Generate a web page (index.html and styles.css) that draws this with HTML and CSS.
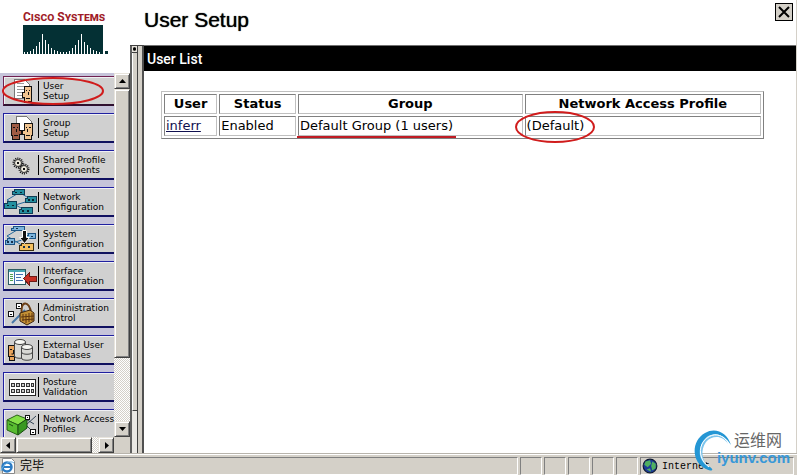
FILE: index.html
```
<!DOCTYPE html>
<html lang="en">
<head>
  <meta charset="UTF-8">
  <title>User Setup</title>
  <link rel="stylesheet" href="styles.css">
</head>
<body>

<div class="workspace">

  <!-- Left frame: logo and menu -->
  <aside class="sidebar">
    <div class="logo">
      <div class="logo-name">Cisco Systems</div>
      <svg class="logo-bridge" viewBox="0 0 85 29" shape-rendering="crispEdges">
        <path fill="#043034" d="M0 0h80v29H0zM82 26h3v3h-3z"/>
        <path stroke="#fff" d="M1.5 27v2M4.5 27v2M7.5 26v3M10.5 24v5M13.5 21v8M16.5 17v12M19.5 9v20M22.5 15v14M25.5 19v10M28.5 23v6M31.5 25v4M34.5 26v3M37.5 27v2M40.5 27v2M43.5 27v2M46.5 26v3M49.5 23v6M52.5 20v9M55.5 15v14M58.5 9v20M61.5 17v12M64.5 20v9M67.5 23v6M70.5 25v4M73.5 26v3M76.5 27v2"/>
      </svg>
    </div>

    <div class="menu-frame">
      <nav class="menu">
        <a href="#" class="item current">
          <svg viewBox="0 0 34 26" shape-rendering="crispEdges">
            <path fill="#fff" stroke="#777" d="M10.5 1.5h10l5 5v14h-15z"/>
            <path stroke="#999" d="M13 5.5h7M13 8.5h9M13 11.5h9M13 14.5h7M13 17.5h6"/>
            <path fill="#f0c490" stroke="#111" d="M20.5 8.5h7v15h-3v1h-4v-5h-2v-5h2z"/>
            <path fill="none" stroke="#111" d="M22 12.5h1M25 12.5h1M24.5 14v3M22 20.5h4"/>
          </svg>
          <span>User<br>Setup</span>
        </a>
        <a href="#" class="item">
          <svg viewBox="0 0 34 26" shape-rendering="crispEdges">
            <path fill="#fff" stroke="#777" d="M12.5 1.5h10l5 5v12h-15z"/>
            <path fill="#a05c44" stroke="#111" d="M7.5 8.5h8v7h2v4h-2v5h-7v-4h-1z"/>
            <path fill="#f0c490" stroke="#111" d="M20.5 8.5h8v12h-1v4h-7v-5h-2v-4h2z"/>
            <path fill="none" stroke="#111" d="M9 12.5h2M13 12.5h1M22 12.5h1M25 12.5h2M12.5 14v3M23.5 14v3M10 20.5h4M22 20.5h4"/>
          </svg>
          <span>Group<br>Setup</span>
        </a>
        <a href="#" class="item">
          <svg viewBox="0 0 34 26">
            <g fill="none" stroke="#111" stroke-dasharray="1 1">
              <circle cx="14" cy="11" r="4.5" stroke-width="2"/>
              <circle cx="20" cy="17" r="4.5" stroke-width="2"/>
            </g>
            <g fill="#eeeadc" stroke="#333">
              <circle cx="14" cy="11" r="3.5"/>
              <circle cx="20" cy="17" r="3.5"/>
            </g>
            <path fill="#111" d="M13 10h2v2h-2zM19 16h2v2h-2z"/>
          </svg>
          <span>Shared Profile<br>Components</span>
        </a>
        <a href="#" class="item">
          <svg viewBox="0 0 34 26">
            <path fill="none" stroke="#266a9c" d="M13 5L3 11L24 23M18 5L28 11L8 17"/>
            <g fill="#2490a0" stroke="#123c54" shape-rendering="crispEdges">
              <path d="M10.5 .5h10v5h-12v-3h2zM23.5 7.5h9v6h-11v-4h2zM3.5 12.5h9v7h-12v-5h3zM17.5 18.5h11v6h-13v-4h2z"/>
            </g>
            <path fill="#0a2430" d="M11 3h2v1h-2zM16 3h2v1h-2zM24 10h2v2h-2zM28 10h2v2h-2zM3 16h2v1H3zM8 16h2v1H8zM18 21h2v2h-2zM23 21h2v2h-2z"/>
          </svg>
          <span>Network<br>Configuration</span>
        </a>
        <a href="#" class="item">
          <svg viewBox="0 0 34 26">
            <path fill="none" stroke="#266a9c" d="M13 4L3 10L24 23M18 4L28 11L8 17"/>
            <g stroke="#1c5484" shape-rendering="crispEdges">
              <path fill="#7cb4dc" d="M9.5 .5h11v4h-13v-2h2zM24.5 7.5h7v5h-10v-3h3zM3.5 12.5h7v6h-9v-4h2z"/>
              <path fill="#f4c060" stroke="#3a2c10" d="M17.5 17.5h12v7h-14v-5h2z"/>
            </g>
            <path fill="#111" stroke="#fff" d="M18.5 4.5h4v7h3l-5 6l-5-6h3z"/>
            <path fill="#17304c" d="M3 15h2v2H3zM7 15h2v2H7zM12 2h2v1h-2zM27 10h2v1h-2zM19 20h2v2h-2zM24 20h2v2h-2z"/>
          </svg>
          <span>System<br>Configuration</span>
        </a>
        <a href="#" class="item">
          <svg viewBox="0 0 34 26" shape-rendering="crispEdges">
            <path fill="#f8fcff" stroke="#2c5c60" d="M4.5 6.5h17v15h-17z"/>
            <path fill="#48a8b4" d="M5 7h16v2H5z"/>
            <path stroke="#50a050" d="M6 11.5h3M6 13.5h3M6 15.5h3M6 17.5h3"/>
            <path stroke="#4070b0" d="M10.5 9v12M12 11.5h7M12 14.5h5M12 17.5h7"/>
            <path fill="#c83024" stroke="#6c1c18" d="M19.5 15.5l6-6v4h7v5h-7v4z"/>
          </svg>
          <span>Interface<br>Configuration</span>
        </a>
        <a href="#" class="item">
          <svg viewBox="0 0 34 26">
            <path fill="none" stroke="#4878a8" stroke-width="2" d="M8 23L21 10"/>
            <g fill="#fff" stroke="#111" shape-rendering="crispEdges">
              <path d="M4.5 11.5h5v5h-5zM12.5 3.5h5v5h-5z"/>
              <path fill="#111" d="M6 14h2M14 6h2"/>
            </g>
            <path fill="none" stroke="#6c4018" stroke-width="2" d="M18 15C15 0 26 0 27 13"/>
            <path fill="#c49034" stroke="#3c2410" d="M16 13l10-3l4 3v8l-7 4l-7-4z"/>
            <path stroke="#5c3410" d="M19 14v7M22 14v9M25 13v9M28 13v8M17 17l13-1M18 20l12-1"/>
          </svg>
          <span>Administration<br>Control</span>
        </a>
        <a href="#" class="item">
          <svg viewBox="0 0 34 26">
            <path fill="#e8a45c" stroke="#111" shape-rendering="crispEdges" d="M4.5 8.5h8v11h-2v4h-5v-4h-1z"/>
            <path fill="none" stroke="#111" d="M6 12.5h2M10 12.5h1M9.5 13v4h-2M6 19.5h4"/>
            <g fill="#d8d8d4" stroke="#444">
              <path d="M10.500 5v14c0 3 11 3 11 0V5"/>
              <ellipse cx="16" cy="5" rx="5.500" ry="2.500" fill="#f8f8f4"/>
              <path d="M17.500 10v11c0 3 11 3 11 0V10"/>
              <ellipse cx="23" cy="10" rx="5.500" ry="2.500" fill="#f8f8f4"/>
              <path fill="none" d="M17.500 15c0 3 11 3 11 0"/>
            </g>
          </svg>
          <span>External User<br>Databases</span>
        </a>
        <a href="#" class="item">
          <svg viewBox="0 0 34 26" shape-rendering="crispEdges">
            <path fill="#fff" stroke="#222" d="M5.5 5.5h26v16h-26z"/>
            <path fill="#ccc" stroke="#333" d="M7.5 9.5h3v3h-3zM12.5 9.5h3v3h-3zM17.5 9.5h3v3h-3zM22.5 9.5h3v3h-3zM27.5 9.5h2v3h-2zM7.5 15.5h3v3h-3zM12.5 15.5h3v3h-3zM17.5 15.5h3v3h-3zM22.5 15.5h3v3h-3zM27.5 15.5h2v3h-2z"/>
          </svg>
          <span>Posture<br>Validation</span>
        </a>
        <a href="#" class="item">
          <svg viewBox="0 0 34 26">
            <path fill="none" stroke="#345" d="M22 14l10-9M22 14l7 7M20 7l10 6"/>
            <path fill="#84e048" stroke="#286018" d="M3 9l10-5l10 4l-9 6z"/>
            <path fill="#58bc30" stroke="#286018" d="M3 9l11 5v10l-11-5z"/>
            <path fill="#389820" stroke="#184c10" d="M14 14l9-6v9l-9 7z"/>
            <path stroke="#184c10" d="M5 13l4 2"/>
            <g fill="#fff" stroke="#111" shape-rendering="crispEdges">
              <path d="M21.5 4.5h4v4h-4zM26.5 18.5h5v5h-5z"/>
              <path d="M23 6.5h1M28 21.5h2"/>
            </g>
          </svg>
          <span>Network Access<br>Profiles</span>
        </a>
        <svg class="mark mark-menu" viewBox="0 0 104 30"><ellipse cx="52" cy="15" rx="50" ry="13"/></svg>
      </nav>

      <!-- Vertical scrollbar -->
      <div class="scroll vertical">
        <button class="arrow" aria-label="Scroll up"><svg viewBox="0 0 7 4"><path d="M0 4L3.5 0L7 4z"/></svg></button>
        <div class="thumb"></div>
        <button class="arrow" aria-label="Scroll down"><svg viewBox="0 0 7 4"><path d="M0 0h7L3.5 4z"/></svg></button>
      </div>
    </div>

    <!-- Horizontal scrollbar -->
    <div class="scroll horizontal">
      <button class="arrow" aria-label="Scroll left"><svg viewBox="0 0 7 7"><path d="M5 0v7L1 3.5z"/></svg></button>
      <div class="thumb"></div>
      <button class="arrow" aria-label="Scroll right"><svg viewBox="0 0 7 7"><path d="M2 0v7l4-3.5z"/></svg></button>
      <div class="corner"></div>
    </div>
  </aside>

  <!-- Right frame -->
  <div class="main">
    <header class="title-bar">
      <h1>User Setup</h1>
      <button class="close" aria-label="Close"><svg viewBox="0 0 12 12"><path d="M1 1l10 10M11 1L1 11"/></svg></button>
    </header>

    <div class="frames">
      <div class="splitter">
        <div class="rail">
          <div class="rail-cap"></div>
          <div class="rail-thumb"></div>
          <div class="rail-track"></div>
        </div>
      </div>

      <main class="content">
        <h2>User List</h2>
        <table class="users">
          <thead>
            <tr>
              <th class="col-user">User</th>
              <th class="col-status">Status</th>
              <th class="col-group">Group</th>
              <th>Network Access Profile</th>
            </tr>
          </thead>
          <tbody>
            <tr>
              <td><a href="#">inferr</a></td>
              <td>Enabled</td>
              <td><span class="underlined">Default Group (1 users)</span></td>
              <td><span class="circled">(Default)<svg class="mark mark-cell" viewBox="0 0 80 32"><ellipse cx="40" cy="16" rx="39" ry="15"/></svg></span></td>
            </tr>
          </tbody>
        </table>
      </main>
    </div>
  </div>
</div>

<!-- Browser status bar -->
<footer class="status">
  <div class="cell message">
    <svg viewBox="0 0 16 16">
      <path fill="#fff" stroke="#888" d="M2.500 .500h9l3 3v12h-12z"/>
      <circle cx="7" cy="9" r="4.500" fill="none" stroke="#2c7cc4" stroke-width="2.500"/>
      <path fill="none" stroke="#2c7cc4" stroke-width="2" d="M3 9h9"/>
      <path fill="none" stroke="#64b0e4" d="M1 13C4 5 10 2 14 5"/>
    </svg>
    <span>完毕</span>
  </div>
  <div class="cell small"></div>
  <div class="cell small"></div>
  <div class="cell small"></div>
  <div class="cell small"></div>
  <div class="cell small"></div>
  <div class="cell zone">
    <svg viewBox="0 0 14 14">
      <circle cx="7" cy="7" r="6" fill="#1c3c98" stroke="#0c1830"/>
      <path fill="#50b060" d="M3 3l4-1l1 3l-3 3l-3-2zM9 3l3 2v4l-3 2l-1-4zM4 10l3-1l1 3z"/>
    </svg>
    <span>Internet</span>
  </div>
</footer>

<!-- Watermark -->
<div class="watermark">
  <svg viewBox="0 0 40 44">
    <path fill="#2496d4" d="M37 17C33 4 21-1 11 5C-3 13-3 34 12 41C19 44 20 42 16 39C5 33 3 17 13 9C21 3 31 7 37 17z"/>
    <path fill="#7cc4ec" d="M34 16C29 7 18 7 12 14C6 22 8 33 15 39C4 33 3 20 11 11C19 4 30 6 34 16z"/>
    <path fill="none" stroke="#fff" d="M32 12C24 3 13 7 8 16C4 25 8 34 15 39"/>
  </svg>
  <div class="watermark-cn">运维网</div>
  <div class="watermark-url">iyunv.com</div>
</div>

</body>
</html>
```
FILE: styles.css
```
* {
  box-sizing: border-box;
}

body {
  margin: 0;
  height: 100vh;
  display: flex;
  flex-direction: column;
  position: relative;
  overflow: hidden;
  background: #fff;
  color: #000;
  font-family: "DejaVu Sans", "Noto Sans CJK SC", sans-serif;
  font-size: 13px;
}

button {
  padding: 0;
  background: #d4d0c8;
}

.workspace {
  flex: 1;
  min-height: 0;
  display: flex;
}

/* Sidebar */
.sidebar {
  width: 130px;
  flex: none;
  display: flex;
  flex-direction: column;
}

.logo {
  height: 73px;
  padding: 10px 0 0 23px;
}

.logo-name {
  height: 15px;
  line-height: 15px;
  font-family: "Liberation Sans Narrow", "Roboto", sans-serif;
  font-size: 12px;
  font-weight: bold;
  font-variant: small-caps;
  white-space: nowrap;
  color: #a01c28;
}

.logo-bridge {
  display: block;
  width: 85px;
  height: 29px;
}

.menu-frame {
  flex: 1;
  min-height: 0;
  display: flex;
}

/* Menu buttons */
.menu {
  flex: 1;
  min-width: 0;
  overflow: hidden;
  position: relative;
  display: flex;
  flex-direction: column;
  gap: 7px;
  padding: 3px 0 0 3px;
  background: #c6c4da;
}

.item {
  flex: none;
  height: 30px;
  display: flex;
  align-items: center;
  border: 1px solid #2020a0;
  border-bottom: 2px solid #101060;
  border-right: 0;
  background: #d0d0d0;
  box-shadow: inset 1px 1px #f0f0f4;
  color: #000;
  font-size: 9px;
  line-height: 10px;
  white-space: nowrap;
  text-decoration: none;
}

.item svg {
  flex: none;
  width: 34px;
  height: 26px;
}

.item span {
  border-left: 1px solid #000;
  padding-left: 4px;
}

.item.current {
  border-color: #702050;
  border-bottom-color: #301030;
}

/* Scrollbars */
.scroll {
  flex: none;
  display: flex;
  background: repeating-conic-gradient(#d4d0c8 0 25%, #fff 0 50%) 0 0 / 2px 2px;
}

.scroll .arrow,
.thumb {
  border: 1px solid;
  border-color: #e8e4dc #404040 #404040 #e8e4dc;
  box-shadow: inset 1px 1px #fff, inset -1px -1px #808080;
  background: #d4d0c8;
}

.scroll .arrow {
  width: 16px;
  height: 16px;
  flex: none;
  display: flex;
  align-items: center;
  justify-content: center;
}

.arrow svg {
  width: 7px;
}

.vertical {
  width: 16px;
  flex-direction: column;
}

.vertical .thumb {
  height: 74%;
}

.vertical .arrow:last-child {
  margin-top: auto;
}

.horizontal {
  height: 16px;
}

.horizontal .thumb {
  flex: 1;
  margin-right: 6px;
}

.corner {
  width: 16px;
  background: #d4d0c8;
}

/* Right side */
.main {
  flex: 1;
  min-width: 0;
  display: flex;
  flex-direction: column;
  border-right: 1px solid #d4d0c8;
}

.title-bar {
  height: 45px;
  flex: none;
  display: flex;
  justify-content: space-between;
  align-items: flex-start;
  padding: 3px 3px 0 14px;
}

h1 {
  margin: 4px 0 0;
  font-family: "Liberation Sans", Arial, sans-serif;
  font-size: 21px;
  line-height: 26px;
  font-weight: normal;
  -webkit-text-stroke: 1px transparent;
  text-shadow: 0 0 1px #000;
}

.close {
  width: 18px;
  height: 18px;
  display: flex;
  align-items: center;
  justify-content: center;
  border: 1px solid #000;
}

.close svg {
  width: 12px;
  height: 12px;
  fill: none;
  stroke: #000;
  stroke-width: 2;
}

.frames {
  flex: 1;
  min-height: 0;
  display: flex;
}

/* Bar between the frames */
.splitter {
  width: 14px;
  flex: none;
  display: flex;
  background: #d4d0c8;
  border-top: 1px solid #404040;
  border-right: 2px solid #505050;
}

.rail {
  width: 8px;
  display: flex;
  flex-direction: column;
  border-left: 2px solid #606060;
  border-right: 1px solid #404040;
}

.rail-cap {
  height: 7px;
  border-bottom: 1px solid #404040;
  background: radial-gradient(#000 1px, #e8e4dc 2px);
}

.rail-thumb {
  flex: 1;
  border-left: 1px solid #fff;
  border-bottom: 1px solid #404040;
}

.rail-track {
  height: 42px;
  background: #eae8e4;
}

/* Content */
.content {
  flex: 1;
  min-width: 0;
}

h2 {
  margin: 0;
  height: 26px;
  padding-left: 3px;
  border-top: 1px solid #707070;
  background: #000;
  color: #fff;
  font-family: Roboto, sans-serif;
  font-size: 14px;
  line-height: 26px;
  font-weight: 500;
}

.users {
  width: calc(100% - 49px);
  margin: 20px 0 0 17px;
  table-layout: fixed;
  border: 1px solid;
  border-color: #c0c0c0 #808080 #808080 #c0c0c0;
  border-spacing: 2px;
}

.users th,
.users td {
  height: 20px;
  padding: 1px;
  border: 1px solid;
  border-color: #808080 #c0c0c0 #c0c0c0 #808080;
  line-height: 16px;
  text-align: left;
  white-space: nowrap;
}

.users th {
  text-align: center;
}

.users a {
  color: #101050;
}

.col-user {
  width: 9%;
}

.col-status {
  width: 13%;
}

.col-group {
  width: 38%;
}

/* Red pen marks */
.mark {
  position: absolute;
  fill: none;
  stroke: #d01c1c;
  stroke-width: 2;
}

.mark-menu {
  left: 1px;
  top: 3px;
  width: 104px;
  height: 30px;
}

.circled,
.underlined {
  position: relative;
}

.mark-cell {
  left: -12px;
  top: -7px;
  width: 80px;
  height: 32px;
}

.underlined::after {
  content: "";
  position: absolute;
  left: -3px;
  right: -3px;
  bottom: -5px;
  height: 2px;
  background: #c01c24;
}

/* Status bar */
.status {
  height: 22px;
  flex: none;
  display: flex;
  gap: 2px;
  padding: 3px 3px 0 0;
  border-top: 1px solid #b8b4ac;
  background: #d4d0c8;
  box-shadow: inset 0 1px #fff;
}

.cell {
  display: flex;
  align-items: center;
  gap: 4px;
  border: 1px solid;
  border-color: #808080 #fff #fff #808080;
}

.message {
  flex: 1;
  border-left: 0;
  font-size: 12px;
  line-height: 14px;
}

.cell svg {
  width: 16px;
  height: 16px;
}

.small {
  width: 22px;
}

.zone {
  width: 154px;
  padding-left: 1px;
  font-family: "Liberation Mono", monospace;
  font-size: 10px;
}

/* Watermark */
.watermark {
  position: absolute;
  right: 5px;
  bottom: 3px;
  width: 98px;
  height: 44px;
}

.watermark svg {
  position: absolute;
  left: 0;
  top: 0;
  width: 40px;
  height: 44px;
}

.watermark-cn {
  position: absolute;
  right: 10px;
  top: 0;
  font-family: "Noto Sans CJK SC", sans-serif;
  font-size: 16px;
  line-height: 22px;
  color: #666;
}

.watermark-url {
  position: absolute;
  right: 2px;
  top: 21px;
  font-family: "Liberation Sans", Arial, sans-serif;
  font-size: 15px;
  line-height: 18px;
  font-weight: bold;
  color: #3898d8;
}
```
